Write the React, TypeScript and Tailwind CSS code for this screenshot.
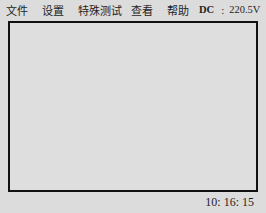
import React from "react";

export default function App() {
  const cjk = { fontFamily: '"Noto Sans CJK SC", "Noto Sans", sans-serif' };
  const serif = { fontFamily: '"Liberation Serif", "DejaVu Serif", serif' };
  return (
    <div className="w-[266px] h-[213px] bg-[#dcdcdc] flex flex-col text-[#1e1e1e] overflow-hidden">
      <div className="h-[21px] flex items-center text-[11px] leading-none" style={cjk}>
        <span className="ml-[6px]">文件</span>
        <span className="ml-[14px]">设置</span>
        <span className="ml-[14px]">特殊测试</span>
        <span className="ml-[9px]">查看</span>
        <span className="ml-[14px]">帮助</span>
        <span className="ml-[10px] font-bold text-[10.5px]" style={serif}>DC</span>
        <span className="ml-[7px] text-[11px]" style={serif}>:</span>
        <span className="ml-[5px] text-[10.5px]" style={serif}>220.5V</span>
      </div>
      <div className="ml-[8px] w-[250px] h-[171px] border-2 border-[#111] bg-[#dedede]" />
      <div className="flex justify-end pr-[12px] pt-[4px] text-[12px] leading-none" style={serif}>
        <span>10: 16: 15</span>
      </div>
    </div>
  );
}
